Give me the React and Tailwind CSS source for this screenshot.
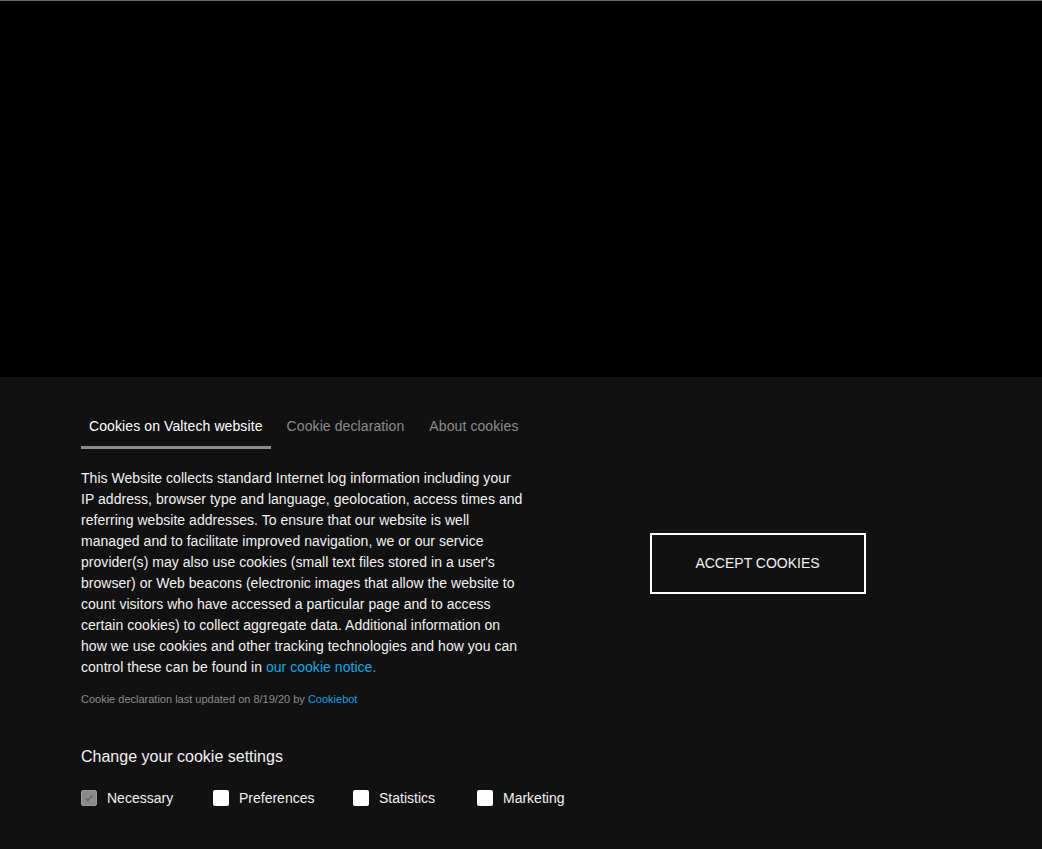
const tabs = ["Cookies on Valtech website", "Cookie declaration", "About cookies"];

const options = [
  { label: "Necessary", checked: true, disabled: true, w: "w-[132px]" },
  { label: "Preferences", w: "w-[140px]" },
  { label: "Statistics", w: "w-[124px]" },
  { label: "Marketing", w: "w-auto" },
];

const Checkbox = ({ checked, disabled }) => (
  <span
    className={
      "flex h-4 w-4 shrink-0 items-center justify-center rounded-[2px] " +
      (disabled ? "bg-[#8a8a8a] border border-[#9a9a9a]" : "bg-white")
    }
  >
    {checked && (
      <svg viewBox="0 0 16 16" className="h-3 w-3">
        <path d="M3.5 8.5l3 3 6-7" fill="none" stroke="#5c5c5c" strokeWidth="1.8" />
      </svg>
    )}
  </span>
);

const App = () => {
  return (
    <div
      className="flex min-h-[849px] flex-col bg-black text-white"
      style={{ fontFamily: '"Liberation Sans", Arial, sans-serif' }}
    >
      <div className="h-px bg-[#6b6b6b]" />
      <div className="h-[376px]" />
      <div className="flex-1 bg-[#111111]">
        <div className="ml-[81px] flex w-[875px] pt-[39px]">
          <div className="w-[444px] shrink-0">
            <div className="flex whitespace-nowrap text-[14px] leading-5 tracking-[0.1px]">
              {tabs.map((t, i) => (
                <div
                  key={t}
                  className={
                    "shrink-0 border-b-[3px] pb-[10px] " +
                    (i === 0
                      ? "border-[#8c8c8c] px-2 text-white"
                      : i === 1
                        ? "border-transparent pl-4 pr-[9px] text-[#8c8c8c]"
                        : "border-transparent pl-4 text-[#8c8c8c]")
                  }
                >
                  {t}
                </div>
              ))}
            </div>
            <p className="mt-[19px] text-[14px] leading-[21px] tracking-[0.04px] text-[#f2f2f2]">
              This Website collects standard Internet log information including your IP
              address, browser type and language, geolocation, access times and referring
              website addresses. To ensure that our website is well managed and to
              facilitate improved navigation, we or our service provider(s) may also use
              cookies (small text files stored in a user's browser) or Web beacons
              (electronic images that allow the website to count visitors who have accessed
              a particular page and to access certain cookies) to collect aggregate data.
              Additional information on how we use cookies and other tracking technologies
              and how you can control these can be found in{" "}
              <a href="#" className="text-[#14a8e0]">
                our cookie notice.
              </a>
            </p>
            <p className="mt-[13px] text-[11px] leading-4 text-[#8c8c8c]">
              Cookie declaration last updated on 8/19/20 by{" "}
              <a href="#" className="text-[#1a9fe6]">
                Cookiebot
              </a>
            </p>
            <h2 className="mt-[40px] text-[16px] leading-5 text-[#f2f2f2]">
              Change your cookie settings
            </h2>
            <div className="mt-[21px] flex w-[560px] text-[14px] leading-5 text-[#f2f2f2]">
              {options.map((o) => (
                <label key={o.label} className={"flex items-center gap-[10px] " + o.w}>
                  <Checkbox checked={o.checked} disabled={o.disabled} />
                  <span>{o.label}</span>
                </label>
              ))}
            </div>
          </div>
          <div className="ml-[34px] flex flex-1 justify-center pt-[117px]">
            <button className="h-[61px] w-[216px] border-2 border-white text-[14px] uppercase text-[#f2f2f2]">
              Accept cookies
            </button>
          </div>
        </div>
      </div>
    </div>
  );
};

export default App;
